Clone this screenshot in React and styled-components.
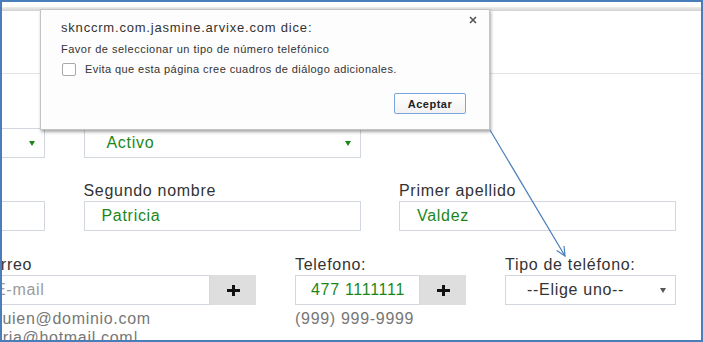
import React from 'react';
import styled, { createGlobalStyle } from 'styled-components';

const GlobalStyle = createGlobalStyle`
  body {
    margin: 0;
    background: #fff;
  }
`;

const Frame = styled.div`
  position: relative;
  width: 703px;
  height: 342px;
  box-sizing: border-box;
  border: 2px solid #4a7ebb;
  overflow: hidden;
  background: #fff;
  font-family: "Liberation Sans", Arial, sans-serif;
`;

const TopGap = styled.div`
  height: 5px;
`;

const BrowserEdge = styled.div`
  height: 4px;
  background: linear-gradient(#ededed, #d2d2d2);
`;

const Header = styled.div`
  height: 62px;
  border-bottom: 1px solid #e4e4e4;
`;

const Form = styled.div`
  display: flex;
  flex-direction: column;
  gap: 24px;
  padding-top: 35px;
  margin-left: -234px;
`;

const Row = styled.div`
  display: grid;
  grid-template-columns: ${(p) => p.$cols};
  column-gap: ${(p) => p.$gap || '38.5px'};
  align-items: start;
  margin-left: ${(p) => p.$shift || '0px'};
  margin-top: ${(p) => p.$top || '0px'};
`;

const Field = styled.div`
  display: flex;
  flex-direction: column;
`;

const Label = styled.div`
  height: 18px;
  font-size: 16px;
  letter-spacing: 0.7px;
  line-height: 18px;
  color: #333;
  margin-bottom: 1px;
  white-space: nowrap;
`;

const Box = styled.div`
  height: 30px;
  box-sizing: border-box;
  border: 1px solid #d3d8e0;
  background: #fff;
  display: flex;
  align-items: center;
  padding: 0 ${(p) => p.$right || '17px'} 0 ${(p) => p.$left || '17px'};
  font-size: 16px;
  letter-spacing: 0.7px;
  color: ${(p) => (p.$muted ? '#9a9a9a' : '#1b871b')};
  white-space: nowrap;
  flex: ${(p) => (p.$grow ? '1 1 auto' : 'none')};
  min-width: 0;
`;

const SelectText = styled.span`
  flex: 1;
  color: ${(p) => (p.$dark ? '#333' : '#1b871b')};
`;

const Caret = styled.span`
  width: 0;
  height: 0;
  border-left: 3.5px solid transparent;
  border-right: 3.5px solid transparent;
  border-top: 5px solid ${(p) => p.$color};
`;

const Group = styled.div`
  display: flex;
  height: 30px;
`;

const AddButton = styled.div`
  width: 46px;
  height: 30px;
  flex: none;
  background: #dedede;
  display: flex;
  align-items: center;
  justify-content: center;
`;

const Help = styled.div`
  font-size: 16px;
  letter-spacing: 0.7px;
  line-height: 19px;
  color: #777;
  white-space: nowrap;
  margin-top: ${(p) => p.$top || '0px'};
`;

const Dialog = styled.div`
  position: absolute;
  left: 38px;
  top: 7px;
  width: 450px;
  height: 121px;
  box-sizing: border-box;
  background: #fdfdfd;
  border: 1px solid #c4c4c4;
  box-shadow: 1px 2px 3px rgba(0, 0, 0, 0.35);
  padding: 10px 23px 0 20px;
  color: #333;
  z-index: 2;
`;

const Close = styled.div`
  position: absolute;
  right: 12px;
  top: 6px;
  width: 8px;
  height: 8px;
  display: flex;
`;

const Title = styled.div`
  font-size: 13px;
  letter-spacing: 0.8px;
  line-height: 16px;
`;

const Message = styled.div`
  font-size: 11px;
  letter-spacing: 0.5px;
  line-height: 14px;
  margin-top: 6px;
`;

const CheckRow = styled.div`
  display: flex;
  align-items: center;
  gap: 9px;
  margin-top: 6px;
  font-size: 11px;
  letter-spacing: 0.42px;
  line-height: 14px;
  padding-left: 1px;
`;

const CheckBox = styled.span`
  width: 12px;
  height: 11px;
  border: 1px solid #a9a9a9;
  border-radius: 2px;
  background: #fff;
`;

const Actions = styled.div`
  display: flex;
  justify-content: flex-end;
  margin-top: 17px;
`;

const AcceptButton = styled.div`
  width: 72px;
  height: 21px;
  box-sizing: border-box;
  border: 1px solid #7aa3e0;
  border-radius: 2px;
  background: linear-gradient(#ffffff, #f2f2f2);
  display: flex;
  align-items: center;
  justify-content: center;
  font-size: 11px;
  font-weight: bold;
  letter-spacing: 0.5px;
  color: #222;
`;

const Overlay = styled.svg`
  position: absolute;
  left: -2px;
  top: -2px;
  width: 703px;
  height: 342px;
  pointer-events: none;
  z-index: 3;
`;

const PlusIcon = () => (
  <svg width="13" height="11" viewBox="0 0 13 11">
    <rect x="0" y="4" width="13" height="3" fill="#111" />
    <rect x="5" y="0" width="3" height="11" fill="#111" />
  </svg>
);

const Select = ({ text, color, dark, left }) => (
  <Box $left={left || '22px'} $right="9px">
    <SelectText $dark={dark}>{text}</SelectText>
    <Caret $color={color} />
  </Box>
);

export default function App() {
  return (
    <>
      <GlobalStyle />
      <Frame>
        <TopGap />
        <BrowserEdge />
        <Header />
        <Form>
          <Row $cols="277px 277px 277px">
            <Field>
              <Label />
              <Select text="" color="#1b871b" />
            </Field>
            <Field>
              <Label>Estatus</Label>
              <Select text="Activo" color="#1b871b" />
            </Field>
            <Field />
          </Row>
          <Row $cols="277px 277px 277px">
            <Field>
              <Label />
              <Box />
            </Field>
            <Field>
              <Label>Segundo nombre</Label>
              <Box>Patricia</Box>
            </Field>
            <Field>
              <Label>Primer apellido</Label>
              <Box>Valdez</Box>
            </Field>
          </Row>
          <Row $cols="277px 171px 171px" $gap="39px" $shift="211px" $top="1px">
            <Field>
              <Label>Correo</Label>
              <Group>
                <Box $grow $muted $left="15px">E-mail</Box>
                <AddButton><PlusIcon /></AddButton>
              </Group>
              <Help $top="4px">alguien@dominio.com</Help>
              <Help>maria@hotmail.com|</Help>
            </Field>
            <Field>
              <Label>Telefono:</Label>
              <Group>
                <Box $grow $left="15px">477 1111111</Box>
                <AddButton><PlusIcon /></AddButton>
              </Group>
              <Help $top="4px">(999) 999-9999</Help>
            </Field>
            <Field>
              <Label>Tipo de teléfono:</Label>
              <Select text="--Elige uno--" color="#555" dark left="21px" />
            </Field>
          </Row>
        </Form>

        <Dialog>
          <Close>
            <svg width="8" height="8" viewBox="0 0 8 8">
              <path d="M1 1 L7 7 M7 1 L1 7" stroke="#555" strokeWidth="1.6" />
            </svg>
          </Close>
          <Title>sknccrm.com.jasmine.arvixe.com dice:</Title>
          <Message>Favor de seleccionar un tipo de número telefónico</Message>
          <CheckRow>
            <CheckBox />
            <span>Evita que esta página cree cuadros de diálogo adicionales.</span>
          </CheckRow>
          <Actions>
            <AcceptButton>Aceptar</AcceptButton>
          </Actions>
        </Dialog>

        <Overlay viewBox="0 0 703 342">
          <path d="M490 130 L565 256" stroke="#4a7ebb" strokeWidth="1.2" fill="none" />
          <path d="M564 246 L565 256 L556.7 250.4" stroke="#4a7ebb" strokeWidth="1.2" fill="none" />
        </Overlay>
      </Frame>
    </>
  );
}
